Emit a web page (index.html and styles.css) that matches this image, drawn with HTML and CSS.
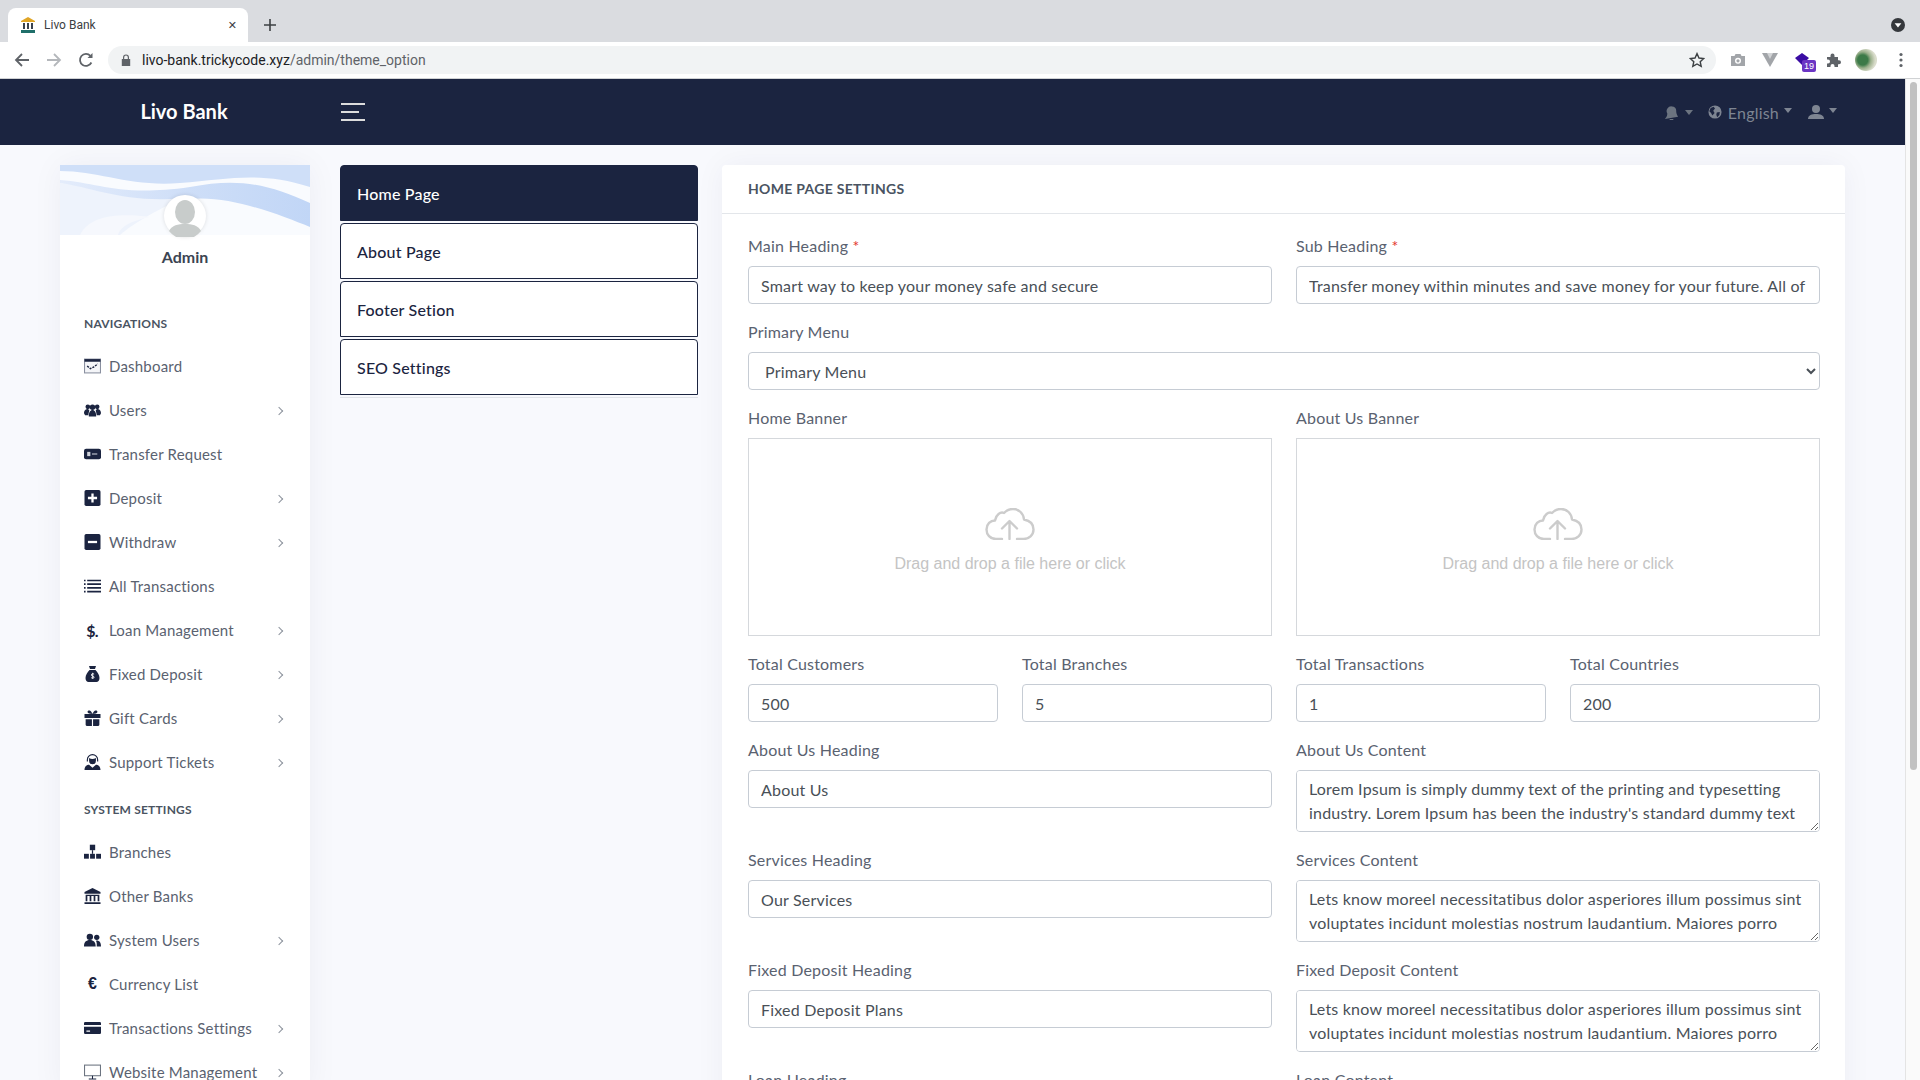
FILE: index.html
```html
<!DOCTYPE html>
<html lang="en">
<head>
  <meta charset="UTF-8" />
  <title>Livo Bank</title>
  <link rel="stylesheet" href="styles.css">
</head>
<body>
  <!-- browser frame -->
  <div class="tabstrip">
    <div class="tab">
      <svg class="favicon" viewBox="0 0 16 16"><path d="M8 0 15 4v1H1V4z" fill="#e0a526"/><path d="M3 6h2v6H3zM7 6h2v6H7zM11 6h2v6h-2z" fill="#39424f"/><path d="M1 13h14v3H1z" fill="#1f6f6a"/></svg>
      <span class="tab-title">Livo Bank</span>
      <span class="tab-close">&#10005;</span>
    </div>
    <svg class="new-tab" viewBox="0 0 12 12"><path d="M6 0v12M0 6h12" stroke="#3c4043" stroke-width="1.6"/></svg>
    <svg class="profile-down" viewBox="0 0 14 14"><circle cx="7" cy="7" r="7" fill="#35383c"/><path d="M3.6 5.2h6.8L7 9.6z" fill="#fff"/></svg>
  </div>
  <div class="toolbar">
    <svg class="tool-btn" viewBox="0 0 16 16"><path d="M15 8H2M8 2 2 8l6 6" fill="none" stroke="#5f6368" stroke-width="1.8"/></svg>
    <svg class="tool-btn" viewBox="0 0 16 16"><path d="M1 8h13M8 2l6 6-6 6" fill="none" stroke="#b4b7bb" stroke-width="1.8"/></svg>
    <svg class="tool-btn" viewBox="0 0 16 16"><path d="M13.4 10.5A6 6 0 1 1 12.4 3.8" fill="none" stroke="#5f6368" stroke-width="1.8"/><path d="M14.5 1v5h-5z" fill="#5f6368"/></svg>
    <div class="omnibox">
      <svg class="lock" viewBox="0 0 10 12"><path d="M2 5V3.4a3 3 0 0 1 6 0V5h1.2v7H.8V5zm1.2 0h3.6V3.4a1.8 1.8 0 0 0-3.6 0z" fill="#5f6368"/></svg>
      <span class="url"><b>livo-bank.trickycode.xyz</b>/admin/theme_option</span>
      <svg class="star" viewBox="0 0 16 16"><path d="M8 1.6 10 6l4.7.5-3.5 3.2 1 4.7L8 12l-4.200 2.400 1-4.700L1.300 6.500 6 6z" fill="none" stroke="#3c4043" stroke-width="1.400"/></svg>
    </div>
    <div class="extensions">
      <svg class="ext" viewBox="0 0 16 16"><path d="M1 4h3.500l1-2h5l1 2H15v10H1z" fill="#a2a5a9"/><circle cx="8" cy="8.800" r="3" fill="#fff"/><circle cx="8" cy="8.800" r="1.600" fill="#a2a5a9"/></svg>
      <svg class="ext" viewBox="0 0 16 16"><path d="M0 1h16L8 15z" fill="#a2a5a9"/><path d="M5 1h6L8 7z" fill="#d2d4d6"/></svg>
      <div class="ext-badge">
        <svg class="ext" viewBox="0 0 16 16"><path d="M8 1 15 6 8 13 1 6z" fill="#3a0ca3"/></svg>
        <span class="badge-count">19</span>
      </div>
      <svg class="ext" viewBox="0 0 16 16"><path d="M1 5h3.500V3.500a2 2 0 0 1 4 0V5H12v3.200h1a2 2 0 0 1 0 4h-1V15H8.500v-1a2 2 0 0 0-4 0v1H1v-3.500h1a2 2 0 0 0 0-4H1z" fill="#5f6368"/></svg>
      <div class="ext-avatar"></div>
      <svg class="ext-dots" viewBox="0 0 4 16"><circle cx="2" cy="2.500" r="1.600"/><circle cx="2" cy="8" r="1.600"/><circle cx="2" cy="13.500" r="1.600"/></svg>
    </div>
  </div>

  <div class="viewport">
    <div class="page">
      <!-- top navbar -->
      <header class="navbar">
        <div class="brand">Livo Bank</div>
        <div class="hamburger"><i></i><i class="short"></i><i></i></div>
        <div class="nav-right">
          <svg class="nav-icon bell" viewBox="0 0 16 16"><path d="M8.500 1.500a4.500 4.500 0 0 1 4.500 5c0 3 1 4.500 2 6L1 15c.500-1.500 2.500-2 2.500-6a5 5 0 0 1 5-7.500zM6 15h4a2 2 0 0 1-4 0z" fill="#6c7480"/></svg>
          <span class="caret bell-caret"></span>
          <svg class="nav-icon" viewBox="0 0 16 16"><circle cx="8" cy="8" r="7.500" fill="#7e8592"/><path d="M3 3.500 6.500 2 8 4 6 6.500 7.500 9 5 12 3.500 9 1.500 7zM10 8.500l3.500-.5L13 11.500 10.500 14 9.500 11z" fill="#1b2440"/></svg>
          <span class="lang">English</span>
          <span class="caret"></span>
          <svg class="nav-icon user" viewBox="0 0 16 16"><circle cx="8" cy="5" r="4" fill="#7e8592"/><path d="M0 15c0-4 4-5 8-5s8 1 8 5z" fill="#7e8592"/></svg>
          <span class="caret"></span>
        </div>
      </header>

      <div class="content">
        <!-- sidebar -->
        <aside class="sidebar">
          <div class="profile-cover">
            <svg viewBox="0 0 250 70" preserveAspectRatio="none">
              <defs>
                <linearGradient id="coverBlue" x1="0" y1="0" x2="1" y2="0">
                  <stop offset="0" stop-color="#dbe6fa"/>
                  <stop offset=".5" stop-color="#bcd2f5"/>
                  <stop offset="1" stop-color="#a9c6f3"/>
                </linearGradient>
              </defs>
              <rect width="250" height="70" fill="#f9fbfe"/>
              <path d="M0 15C40 18 60 32 130 22 180 12 210 20 250 38V62C220 50 170 30 130 34 70 40 40 28 0 18z" fill="url(#coverBlue)" opacity=".7"/>
              <path d="M0 0H250V22C200 6 170 14 120 18 70 22 40 6 0 6z" fill="#cfdff8"/>
              <path d="M0 18C30 22 60 36 110 34 130 33 90 45 60 70H0z" fill="#eef3fc"/>
              <path d="M20 70C30 50 60 48 90 52 70 56 60 62 58 70z" fill="#f6f8fd"/>
            </svg>
          </div>
          <div class="avatar">
            <svg viewBox="0 0 42 42"><ellipse cx="21" cy="17" rx="10" ry="12" fill="#c8cccb"/><path d="M5 36c3-6 9-7 16-7s13 1 16 7a20 20 0 0 1-32 0z" fill="#c8cccb"/></svg>
          </div>
          <div class="admin-name">Admin</div>

          <div class="side-label">Navigations</div>
          <ul class="side-menu">
            <li><svg class="side-icon" viewBox="0 0 16 14"><rect x=".5" y=".5" width="15" height="13" fill="#f4f5f8" stroke="#8a90a0"/><rect x=".5" y=".5" width="15" height="2.500" fill="#1b2440"/><path d="M3 7l3 2.500 3-1.500 4-3" fill="none" stroke="#1b2440" stroke-width="1.300" stroke-dasharray="2 1"/></svg><span>Dashboard</span></li>
            <li class="has-sub"><svg class="side-icon" viewBox="0 0 16 12"><circle cx="3.600" cy="3" r="2.200"/><circle cx="12.400" cy="3" r="2.200"/><circle cx="8" cy="3.500" r="2.600"/><path d="M0 9c0-3 2-4 3.500-4L5 6 4 11H1zM16 9c0-3-2-4-3.500-4L11 6l1 5h3zM4.500 12c0-4 1.500-6 3.500-6s3.500 2 3.500 6z"/></svg><span>Users</span></li>
            <li><svg class="side-icon" viewBox="0 0 16 10"><rect width="16" height="10" rx="2"/><rect x="3" y="3" width="3" height="4" fill="#cfd2da"/><rect x="7.500" y="4.500" width="5" height="1" fill="#cfd2da"/></svg><span>Transfer Request</span></li>
            <li class="has-sub"><svg class="side-icon" viewBox="0 0 14 14"><rect width="14" height="14" rx="1.500"/><path d="M7 3v8M3 7h8" stroke="#fff" stroke-width="2"/></svg><span>Deposit</span></li>
            <li class="has-sub"><svg class="side-icon" viewBox="0 0 14 14"><rect width="14" height="14" rx="1.500"/><path d="M3 7h8" stroke="#fff" stroke-width="2"/></svg><span>Withdraw</span></li>
            <li><svg class="side-icon" viewBox="0 0 16 12"><path d="M0 0h1.500v1.500H0zM3 0h13v1.500H3zM0 3.500h1.500V5H0zM3 3.500h13V5H3zM0 7h1.500v1.500H0zM3 7h13v1.500H3zM0 10.500h1.500V12H0zM3 10.500h13V12H3z"/></svg><span>All Transactions</span></li>
            <li class="has-sub"><span class="glyph-icon">$<small>.</small></span><span>Loan Management</span></li>
            <li class="has-sub"><svg class="side-icon" viewBox="0 0 14 16"><path d="M3.500 0h7L9.500 3h-5zM4 4h6c2 2 4 5 4 8 0 2.500-1.500 4-3 4H3c-1.500 0-3-1.500-3-4 0-3 2-6 4-8z"/><path d="M8.600 8.200C8 7.600 5.800 7.600 5.800 9c0 1.400 2.800.8 2.800 2.200 0 1.200-2 1.200-2.900.5M7.200 6.800v6" fill="none" stroke="#fff" stroke-width=".9"/></svg><span>Fixed Deposit</span></li>
            <li class="has-sub"><svg class="side-icon" viewBox="0 0 14 14"><path d="M0 3.500h14V7H0zM1 8h5.500v6H2a1 1 0 0 1-1-1zM7.500 8H13v5a1 1 0 0 1-1 1H7.500zM7 3.500 4 3C1.500 2 3 0 4.500.5 6 1 7 3.500 7 3.500 7 3.500 8 1 9.500.5 11 0 12.500 2 10 3z"/></svg><span>Gift Cards</span></li>
            <li class="has-sub"><svg class="side-icon" viewBox="0 0 14 14"><path d="M7 0a5 5 0 0 1 5 5v1.500h-1V5a4 4 0 0 0-8 0v1.500H2V5a5 5 0 0 1 5-5z"/><path d="M4 3.500c2 1.200 4 1 6 0V6a3 3 0 0 1-6 0z"/><path d="M0 14c0-3 2-4.500 4-4.500L7 12l3-2.500c2 0 4 1.500 4 4.500z"/></svg><span>Support Tickets</span></li>
          </ul>

          <div class="side-label">System Settings</div>
          <ul class="side-menu">
            <li><svg class="side-icon" viewBox="0 0 14 12"><rect x="4.800" width="4.400" height="4.500"/><rect y="7.500" width="4" height="4"/><rect x="5" y="7.500" width="4" height="4"/><rect x="10" y="7.500" width="4" height="4"/><path d="M7 4.500v3" stroke="#1b2440"/></svg><span>Branches</span></li>
            <li><svg class="side-icon" viewBox="0 0 14 14"><path d="M7 0l7 3.500V5H0V3.500z"/><path d="M1 6h12v5.500h-1.500V7h-2v4.500H8V7H6v4.500H4.500V7h-2v4.500H1zM0 12.500h14V14H0z"/></svg><span>Other Banks</span></li>
            <li class="has-sub"><svg class="side-icon" viewBox="0 0 16 12"><circle cx="5.500" cy="3" r="3"/><circle cx="12" cy="3.500" r="2.500"/><path d="M0 12c0-4 2-6 5.500-6s5.500 2 5.500 6zM12 12h4c0-3.500-1.500-5.500-4-5.500l-.8.200c1 1.400.8 3.500.8 5.300z"/></svg><span>System Users</span></li>
            <li><span class="glyph-icon euro">&euro;</span><span>Currency List</span></li>
            <li class="has-sub"><svg class="side-icon" viewBox="0 0 14 10"><path d="M1 0h12a1 1 0 0 1 1 1v1.500H0V1a1 1 0 0 1 1-1zM0 4h14v5a1 1 0 0 1-1 1H1a1 1 0 0 1-1-1zm2 3v1h3V7z"/></svg><span>Transactions Settings</span></li>
            <li class="has-sub"><svg class="side-icon" viewBox="0 0 16 14"><rect x=".5" y=".5" width="15" height="10" fill="none" stroke="#6c7480"/><path d="M8 10.500V13M4.500 13.500h7" stroke="#1b2440"/></svg><span>Website Management</span></li>
          </ul>
        </aside>

        <!-- settings tabs -->
        <nav class="settings-tabs">
          <a class="settings-tab active" href="#">Home Page</a>
          <a class="settings-tab" href="#">About Page</a>
          <a class="settings-tab" href="#">Footer Setion</a>
          <a class="settings-tab" href="#">SEO Settings</a>
        </nav>

        <!-- form -->
        <section class="card">
          <div class="card-header">Home Page Settings</div>
          <div class="card-body">
            <div class="row two">
              <div class="field"><label>Main Heading <em>*</em></label><input type="text" value="Smart way to keep your money safe and secure"></div>
              <div class="field"><label>Sub Heading <em>*</em></label><input type="text" value="Transfer money within minutes and save money for your future. All of your information is safe"></div>
            </div>
            <div class="field">
              <label>Primary Menu</label>
              <select><option>Primary Menu</option></select>
            </div>
            <div class="row two">
              <div class="field">
                <label>Home Banner</label>
                <div class="dropify">
                  <svg viewBox="0 0 50 32"><path d="M17 31H11C5 31 1.500 26.500 1.500 21.500 1.500 16 5.500 12.500 10 12.500 11 6.500 15.500 3.500 19 5 21.500 2 25 1 28 1c6 0 10.500 4.500 11 10.500 5.500 1 9.500 4.500 9.500 10S44 31 38.500 31H32M24.500 31V14M17 20.500l7.500-7.500 7.500 7.500" fill="none" stroke="#ccc" stroke-width="2.400" stroke-linecap="round" stroke-linejoin="round"/></svg>
                  <p>Drag and drop a file here or click</p>
                </div>
              </div>
              <div class="field">
                <label>About Us Banner</label>
                <div class="dropify">
                  <svg viewBox="0 0 50 32"><path d="M17 31H11C5 31 1.500 26.500 1.500 21.500 1.500 16 5.500 12.500 10 12.500 11 6.500 15.500 3.500 19 5 21.500 2 25 1 28 1c6 0 10.500 4.500 11 10.500 5.500 1 9.500 4.500 9.500 10S44 31 38.500 31H32M24.500 31V14M17 20.500l7.500-7.500 7.500 7.500" fill="none" stroke="#ccc" stroke-width="2.400" stroke-linecap="round" stroke-linejoin="round"/></svg>
                  <p>Drag and drop a file here or click</p>
                </div>
              </div>
            </div>
            <div class="row four">
              <div class="field"><label>Total Customers</label><input type="text" value="500"></div>
              <div class="field"><label>Total Branches</label><input type="text" value="5"></div>
              <div class="field"><label>Total Transactions</label><input type="text" value="1"></div>
              <div class="field"><label>Total Countries</label><input type="text" value="200"></div>
            </div>
            <div class="row two">
              <div class="field"><label>About Us Heading</label><input type="text" value="About Us"></div>
              <div class="field"><label>About Us Content</label><textarea>Lorem Ipsum is simply dummy text of the printing and typesetting industry. Lorem Ipsum has been the industry's standard dummy text ever since the 1500s, when an unknown printer took a galley of type and scrambled it to make a type specimen book.</textarea></div>
            </div>
            <div class="row two">
              <div class="field"><label>Services Heading</label><input type="text" value="Our Services"></div>
              <div class="field"><label>Services Content</label><textarea>Lets know moreel necessitatibus dolor asperiores illum possimus sint voluptates incidunt molestias nostrum laudantium. Maiores porro cumque quaerat laudantium nostrum molestias incidunt voluptates.</textarea></div>
            </div>
            <div class="row two">
              <div class="field"><label>Fixed Deposit Heading</label><input type="text" value="Fixed Deposit Plans"></div>
              <div class="field"><label>Fixed Deposit Content</label><textarea>Lets know moreel necessitatibus dolor asperiores illum possimus sint voluptates incidunt molestias nostrum laudantium. Maiores porro cumque quaerat laudantium nostrum molestias incidunt voluptates.</textarea></div>
            </div>
            <div class="row two">
              <div class="field"><label>Loan Heading</label></div>
              <div class="field"><label>Loan Content</label></div>
            </div>
          </div>
        </section>
      </div>
    </div>
    <div class="page-scrollbar"><div class="page-thumb"></div></div>
  </div>
</body>
</html>
```

FILE: styles.css
```css
* {
  margin: 0;
  padding: 0;
  box-sizing: border-box;
}

html, body {
  width: 100%;
  height: 100%;
  overflow: hidden;
}

body {
  display: flex;
  flex-direction: column;
  font-family: 'Lato', sans-serif;
  font-size: 16px;
  color: #5a6270;
  background: #f8f9fd;
}

/* browser frame */
.tabstrip {
  height: 42px;
  flex: none;
  display: flex;
  align-items: flex-end;
  padding-left: 8px;
  background: #dadce0;
}

.tab {
  width: 240px;
  height: 34px;
  display: flex;
  align-items: center;
  padding: 0 11px 0 12px;
  background: #fff;
  border-radius: 8px 8px 0 0;
}

.favicon {
  width: 16px;
  height: 16px;
}

.tab-title {
  flex: 1;
  margin-left: 8px;
  font: 12px 'Roboto', sans-serif;
  color: #3c4043;
}

.tab-close {
  font: 11px 'DejaVu Sans', sans-serif;
  color: #3c4043;
}

.new-tab {
  width: 12px;
  height: 12px;
  margin: 0 0 11px 16px;
}

.profile-down {
  width: 14px;
  height: 14px;
  margin: 0 15px 10px auto;
}

.toolbar {
  height: 37px;
  flex: none;
  display: flex;
  align-items: center;
  padding: 0 0 1px 14px;
  background: #fff;
  border-bottom: 1px solid #d0d2d4;
}

.tool-btn {
  width: 16px;
  height: 16px;
  margin-right: 16px;
}

.omnibox {
  width: 1608px;
  height: 28px;
  margin-left: -2px;
  display: flex;
  align-items: center;
  padding: 0 11px 0 13px;
  background: #f1f3f4;
  border-radius: 14px;
}

.lock {
  width: 10px;
  height: 12px;
}

.url {
  flex: 1;
  margin-left: 11px;
  font: 14px 'Roboto', sans-serif;
  color: #5f6368;
}

.url b {
  font-weight: 400;
  color: #202124;
}

.star {
  width: 16px;
  height: 16px;
}

.extensions {
  flex: 1;
  display: flex;
  align-items: center;
  padding-left: 14px;
  gap: 16px;
}

.ext {
  width: 16px;
  height: 16px;
  display: block;
}

.ext-badge {
  position: relative;
}

.badge-count {
  position: absolute;
  left: 8px;
  top: 8px;
  width: 14px;
  height: 12px;
  background: #6b35c4;
  border-radius: 2px;
  color: #fff;
  font: 9px/12px 'Liberation Sans', sans-serif;
  text-align: center;
}

.ext-avatar {
  width: 22px;
  height: 22px;
  margin: 0 -3px;
  border-radius: 50%;
  background: radial-gradient(circle at 35% 50%, #3c7a48 0 28%, #9bb08c 45%, #d9dccb 70%);
}

.ext-dots {
  width: 4px;
  height: 16px;
  margin-left: 9px;
  fill: #5f6368;
}

/* page */
.viewport {
  flex: 1;
  min-height: 0;
  display: flex;
}

.page {
  flex: 1;
  min-width: 0;
  overflow: hidden;
}

.page-scrollbar {
  width: 15px;
  flex: none;
  padding: 3px 3px 0 4px;
  background: #fafafa;
  border-left: 1px solid #e4e4e4;
}

.page-thumb {
  height: 688px;
  background: #c1c1c1;
  border-radius: 4px;
}

.navbar {
  height: 66px;
  display: flex;
  align-items: center;
  background: #1b2440;
}

.brand {
  width: 340px;
  padding-left: 0;
  padding-right: 0;
  text-align: center;
  padding-bottom: 3px;
  margin-left: 14px;
  margin-right: -13px;
  width: 340px;
  font-size: 20px;
  font-weight: 700;
  color: #fff;
}

.hamburger {
  width: 24px;
  display: flex;
  flex-direction: column;
  gap: 6px;
}

.hamburger i {
  height: 2px;
  background: #dcdcdc;
}

.hamburger .short {
  width: 18px;
}

.nav-right {
  margin-left: auto;
  margin-right: 68px;
  display: flex;
  align-items: center;
  color: #7e8592;
}

.nav-icon {
  width: 14px;
  height: 14px;
}

.bell {
  width: 15px;
  height: 15px;
}

.user {
  width: 16px;
  height: 16px;
  margin-left: 16px;
}

.lang {
  margin-left: 6px;
  font-size: 16px;
  letter-spacing: .2px;
}

.caret {
  width: 0;
  height: 0;
  margin: -4px 0 0 5px;
  border-style: solid;
  border-width: 5px 4.500px 0;
  border-color: #7e8592 transparent transparent;
}

.bell-caret {
  margin: 0 15px 0 6px;
  border-top-color: #6c7480;
}

.content {
  display: flex;
  align-items: flex-start;
  padding: 20px 60px 0;
}

/* sidebar */
.sidebar {
  width: 250px;
  flex: none;
  background: #fff;
  box-shadow: 0 0 30px rgba(30, 40, 70, .05);
}

.profile-cover {
  height: 70px;
}

.profile-cover svg {
  display: block;
  width: 100%;
  height: 100%;
}

.avatar {
  width: 42px;
  height: 42px;
  margin: -40px auto 0;
  position: relative;
  background: #fff;
  border-radius: 50%;
  box-shadow: 0 0 4px rgba(0, 0, 0, .12);
}

.avatar svg {
  display: block;
}

.admin-name {
  margin-top: 8px;
  line-height: 24px;
  font-size: 16px;
  font-weight: 700;
  text-align: center;
  color: #3b4452;
}

.side-label {
  height: 40px;
  margin-top: 6px;
  padding-left: 24px;
  line-height: 40px;
  font-size: 12px;
  font-weight: 700;
  letter-spacing: .2px;
  text-transform: uppercase;
  color: #4a5462;
}

.admin-name + .side-label {
  margin-top: 35px;
}

.side-menu {
  list-style: none;
}

.side-menu li {
  height: 44px;
  display: flex;
  align-items: center;
  padding: 0 24px;
  font-size: 15px;
  letter-spacing: .2px;
  color: #5a6270;
}

.side-menu li span:last-child {
  margin-left: 8px;
}

.side-icon {
  width: 17px;
  height: 16px;
  flex: none;
  fill: #1b2440;
}

.glyph-icon {
  width: 17px;
  flex: none;
  font-size: 16px;
  font-weight: 700;
  color: #1b2440;
  text-align: center;
}

.glyph-icon small {
  font-size: 16px;
  margin-left: -1px;
}

.euro {
  font-family: 'Liberation Sans', sans-serif;
}

.has-sub {
  position: relative;
}

.has-sub::after {
  content: "";
  position: absolute;
  right: 28px;
  top: 20px;
  width: 5px;
  height: 5px;
  border-top: 1px solid #8d939d;
  border-right: 1px solid #8d939d;
  transform: rotate(45deg);
}

/* settings tabs */
.settings-tabs {
  width: 358px;
  flex: none;
  display: flex;
  flex-direction: column;
  gap: 2px;
  margin-left: 30px;
  padding-bottom: 2px;
  border-bottom: 1px solid #e0e3e8;
}

.settings-tab {
  height: 56px;
  display: flex;
  align-items: center;
  padding-left: 16px;
  background: #fff;
  border: 1.500px solid #1b2440;
  border-radius: 4px 4px 0 0;
  font-size: 16px;
  font-weight: 500;
  letter-spacing: .2px;
  text-decoration: none;
  color: #1b2440;
}

.settings-tab.active {
  background: #1b2440;
  color: #fff;
}

/* form card */
.card {
  width: 1123px;
  flex: none;
  margin-left: 24px;
  background: #fff;
  border-radius: 4px;
  box-shadow: 0 0 30px rgba(30, 40, 70, .05);
}

.card-header {
  height: 49px;
  padding-left: 26px;
  line-height: 48px;
  font-size: 14px;
  font-weight: 700;
  letter-spacing: .3px;
  text-transform: uppercase;
  color: #4a5462;
  border-bottom: 1px solid #e3e6ea;
}

.card-body {
  padding: 20px 25px 0 26px;
}

.row {
  display: grid;
  gap: 0 24px;
}

.two {
  grid-template-columns: 1fr 1fr;
}

.four {
  grid-template-columns: repeat(4, 1fr);
}

.field {
  margin-bottom: 16px;
}

.field label {
  display: block;
  margin-bottom: 8px;
  line-height: 24px;
  letter-spacing: .2px;
}

.field em {
  font-style: normal;
  color: #e3342f;
}

.field input,
.field select,
.field textarea {
  display: block;
  width: 100%;
  height: 38px;
  padding: 6px 12px;
  background: #fff;
  border: 1px solid #c6ccd4;
  border-radius: 4px;
  font-family: inherit;
  font-size: 16px;
  letter-spacing: .2px;
  line-height: 24px;
  color: #495057;
}

.field textarea {
  height: 62px;
  overflow-y: scroll;
}

.field textarea::-webkit-scrollbar {
  width: 15px;
}

.field textarea::-webkit-scrollbar-track {
  background: #fafafa;
  border-left: 1px solid #e8e8e8;
}

.field textarea::-webkit-scrollbar-thumb {
  background: #bdbdbd;
  border: 3px solid #fafafa;
  border-left-width: 4px;
  border-radius: 6px;
}

.dropify {
  height: 198px;
  display: flex;
  flex-direction: column;
  align-items: center;
  padding-top: 69px;
  border: 1px solid #d5d8dc;
}

.dropify svg {
  width: 50px;
  height: 32px;
}

.dropify p {
  margin-top: 12px;
  font-family: 'Liberation Sans', sans-serif;
  font-size: 16px;
  line-height: 24px;
  color: #c4c4c4;
}
```
